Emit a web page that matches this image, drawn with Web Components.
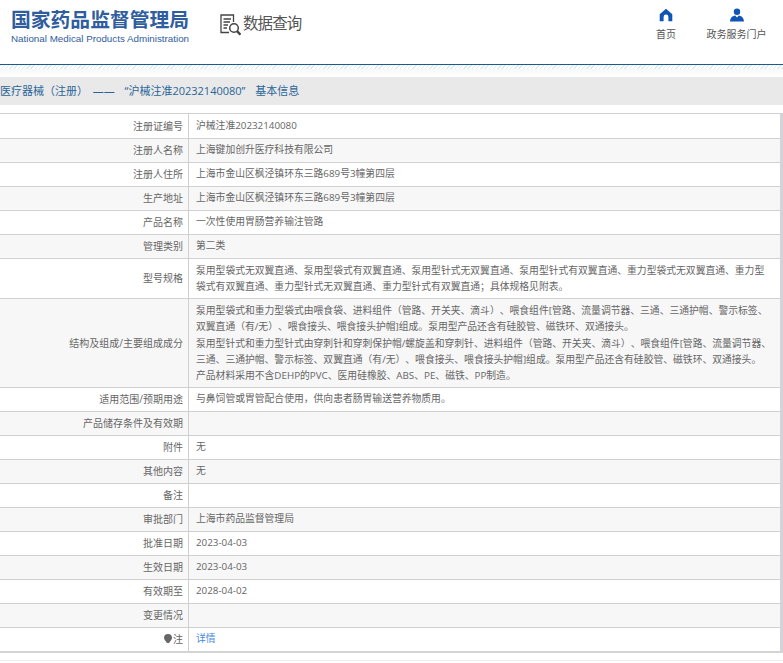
<!DOCTYPE html>
<html lang="zh-CN">
<head>
<meta charset="utf-8">
<title>数据查询</title>
<style>
  html, body { margin: 0; padding: 0; background: #fff; }
  body {
    width: 783px;
    height: 663px;
    overflow: hidden;
    color: #666;
    font: 10px "Open Sans", "Noto Sans CJK SC", sans-serif;
  }
</style>
</head>
<body>
<site-header></site-header>
<title-bar>医疗器械（注册） ——  “沪械注准20232140080”  基本信息</title-bar>
<info-table>
  <info-row label="注册证编号">沪械注准20232140080</info-row>
  <info-row label="注册人名称" alt>上海键加创升医疗科技有限公司</info-row>
  <info-row label="注册人住所">上海市金山区枫泾镇环东三路689号3幢第四层</info-row>
  <info-row label="生产地址" alt>上海市金山区枫泾镇环东三路689号3幢第四层</info-row>
  <info-row label="产品名称">一次性使用胃肠营养输注管路</info-row>
  <info-row label="管理类别" alt>第二类</info-row>
  <info-row label="型号规格" long>泵用型袋式无双翼直通、泵用型袋式有双翼直通、泵用型针式无双翼直通、泵用型针式有双翼直通、重力型袋式无双翼直通、重力型袋式有双翼直通、重力型针式无双翼直通、重力型针式有双翼直通；具体规格见附表。</info-row>
  <info-row label="结构及组成/主要组成成分" alt long>泵用型袋式和重力型袋式由喂食袋、进料组件（管路、开关夹、滴斗）、喂食组件[管路、流量调节器、三通、三通护帽、警示标签、双翼直通（有/无）、喂食接头、喂食接头护帽]组成。泵用型产品还含有硅胶管、磁铁环、双通接头。<br>泵用型针式和重力型针式由穿刺针和穿刺保护帽/螺旋盖和穿刺针、进料组件（管路、开关夹、滴斗）、喂食组件[管路、流量调节器、三通、三通护帽、警示标签、双翼直通（有/无）、喂食接头、喂食接头护帽]组成。泵用型产品还含有硅胶管、磁铁环、双通接头。<br>产品材料采用不含DEHP的PVC、医用硅橡胶、ABS、PE、磁铁、PP制造。</info-row>
  <info-row label="适用范围/预期用途">与鼻饲管或胃管配合使用，供向患者肠胃输送营养物质用。</info-row>
  <info-row label="产品储存条件及有效期" alt></info-row>
  <info-row label="附件">无</info-row>
  <info-row label="其他内容" alt>无</info-row>
  <info-row label="备注"></info-row>
  <info-row label="审批部门" alt>上海市药品监督管理局</info-row>
  <info-row label="批准日期">2023-04-03</info-row>
  <info-row label="生效日期" alt>2023-04-03</info-row>
  <info-row label="有效期至">2028-04-02</info-row>
  <info-row label="变更情况" alt></info-row>
  <info-row label="注" note><a>详情</a></info-row>
</info-table>
<page-foot></page-foot>

<script>
class SiteHeader extends HTMLElement {
  constructor() {
    super();
    this.shadowDOM = this.attachShadow({ mode: 'open' });
  }

  connectedCallback() {
    this.shadowDOM.innerHTML = `
      <style>
        :host {
          display: block;
          height: 64px;
          border-bottom: 1px solid #1d5a8c;
          box-sizing: content-box;
        }
        .bar {
          display: flex;
          height: 64px;
          padding-left: 11px;
        }
        .logo { width: 195px; padding-top: 8px; }
        .logo-cn {
          font: bold 19.8px/22px "Noto Sans CJK SC", sans-serif;
          color: #2f5d9e;
          white-space: nowrap;
        }
        .logo-en {
          margin-top: 3px;
          font: 9.8px/12px "Liberation Sans", sans-serif;
          color: #2f5d9e;
          white-space: nowrap;
        }
        .query {
          display: flex;
          align-items: flex-start;
          margin-left: 14px;
          padding-top: 12px;
          font: 15.5px/20px "Noto Sans CJK SC", sans-serif;
          color: #555;
          letter-spacing: -0.9px;
          white-space: nowrap;
        }
        .query svg { display: block; margin: 2px 2px 0 0; }
        nav { display: flex; margin-left: auto; padding-top: 8px; }
        .item {
          display: flex;
          flex-direction: column;
          align-items: center;
          font: 10px/12px "Noto Sans CJK SC", sans-serif;
          color: #555;
          white-space: nowrap;
        }
        .item svg { display: block; margin-bottom: 6px; }
        .home { width: 20px; margin-right: 31px; }
        .portal { width: 59px; margin-right: 17px; }
      </style>
      <div class="bar">
        <div class="logo">
          <div class="logo-cn">国家药品监督管理局</div>
          <div class="logo-en">National Medical Products Administration</div>
        </div>
        <div class="query">
          <svg width="21" height="22" viewBox="0 0 21 22" fill="none" stroke="#444" stroke-width="1.3">
            <path d="M9 18.5H1V1H13.5V8"/>
            <path d="M3.5 5H11M3.5 8H10M3.5 11H8M3.5 14H7"/>
            <circle cx="14" cy="14" r="4.3" stroke-width="1.5"/>
            <path d="M17 17.2L20.5 20.7" stroke-width="2.4"/>
          </svg>
          <span>数据查询</span>
        </div>
        <nav>
          <div class="item home">
            <svg width="14" height="14" viewBox="0 0 14 14" fill="#0f55b5">
              <path d="M7 .8L13.3 6.2V13.2H9.4V9A2.4 2.4 0 0 0 4.6 9V13.2H.7V6.2Z"/>
            </svg>
            首页
          </div>
          <div class="item portal">
            <svg width="14" height="14" viewBox="0 0 14 14" fill="#0f55b5">
              <circle cx="7" cy="3.7" r="3.2"/>
              <path d="M0 13.4C.4 9.6 2.3 8.2 5.2 7.6L7 9.6L8.8 7.6C11.7 8.2 13.6 9.6 14 13.4Z"/>
            </svg>
            政务服务门户
          </div>
        </nav>
      </div>
    `;
  }
}

class TitleBar extends HTMLElement {
  constructor() {
    super();
    const root = this.attachShadow({ mode: 'open' });
    root.innerHTML = `
      <style>
        :host { display: block; }
        .hatch {
          height: 4px;
          background: repeating-linear-gradient(135deg, #dfeaf0 0 1px, #fff 1px 3px);
        }
        .fade { height: 8px; background: linear-gradient(#f8f8f8, #fff); }
        .bar {
          height: 28px;
          background: #e9e9e9;
          color: #2b6598;
          font: 11px/28px "Open Sans", "Noto Sans CJK SC", sans-serif;
          text-spacing-trim: space-all;
          word-spacing: 2px;
          white-space: pre;
        }
      </style>
      <div class="hatch"></div>
      <div class="fade"></div>
      <div class="bar"><slot></slot></div>
    `;
  }
}

class InfoTable extends HTMLElement {
  constructor() {
    super();
    const root = this.attachShadow({ mode: 'open' });
    root.innerHTML = `
      <style>
        :host {
          display: block;
          width: 780px;
          margin-top: 8px;
          border-top: 1px solid #d0d0d0;
          border-right: 3px solid #d4d4d8;
          border-bottom: 2px solid #d4d4d4;
        }
      </style>
      <slot></slot>
    `;
  }
}

class InfoRow extends HTMLElement {
  constructor() {
    super();
    const root = this.attachShadow({ mode: 'open' });
    root.innerHTML = `
      <style>
        :host {
          display: grid;
          grid-template-columns: 189px 1fr;
          min-height: 23px;
          border-bottom: 1px solid #d0d0d0;
          font: 9.8px/16.3px "Open Sans", "Noto Sans CJK SC", sans-serif;
          color: #666;
          background: #fff;
          text-spacing-trim: space-all;
        }
        :host([alt]) { background: #f7f7f7; }
        :host(:first-child) { min-height: 24px; }
        :host(:last-child) { border-bottom: 0; }
        .label {
          display: flex;
          align-items: center;
          justify-content: flex-end;
          padding-right: 5px;
          border-right: 1px solid #d0d0d0;
          font-size: 10px;
          white-space: nowrap;
        }
        .label svg { margin-right: 1px; }
        .value {
          align-self: center;
          padding: 3px 8px 3.4px 7px;
        }
        :host([long]) .value { padding: 4px 8px 2.4px 7px; }
        ::slotted(a) { color: #3f8be0; }
      </style>
      <div class="label"><span id="note"></span><span id="label"></span></div>
      <div class="value"><slot></slot></div>
    `;
  }

  connectedCallback() {
    this.shadowRoot.querySelector('#label').textContent = this.getAttribute('label');
    if (this.hasAttribute('note')) {
      this.shadowRoot.querySelector('#note').innerHTML = `
        <svg width="8" height="10" viewBox="0 0 8 10" fill="#666" style="display:block">
          <path d="M4 0A4 4 0 0 1 8 4C8 6 6 7 5 9H3C2 7 0 6 0 4A4 4 0 0 1 4 0Z"/>
        </svg>`;
    }
  }
}

class PageFoot extends HTMLElement {
  constructor() {
    super();
    const root = this.attachShadow({ mode: 'open' });
    root.innerHTML = `
      <style>
        :host { display: block; margin-top: 7px; border-top: 1px solid #eee; }
      </style>
    `;
  }
}

customElements.define('site-header', SiteHeader);
customElements.define('title-bar', TitleBar);
customElements.define('info-table', InfoTable);
customElements.define('info-row', InfoRow);
customElements.define('page-foot', PageFoot);
</script>
</body>
</html>
